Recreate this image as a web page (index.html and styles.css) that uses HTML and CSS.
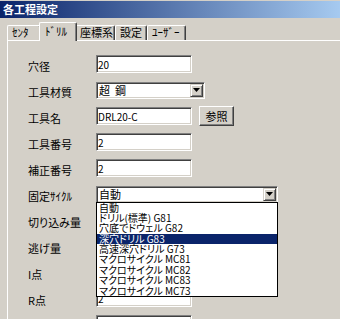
FILE: index.html
```html
<!DOCTYPE html>
<html lang="ja">
<head>
  <meta charset="UTF-8" />
  <title>各工程設定</title>
  <link rel="stylesheet" href="styles.css">
</head>
<body>

  <div class="titlebar">各工程設定</div>

  <div class="tabs">
    <div class="tab w1">ｾﾝﾀ</div>
    <div class="tab active">ﾄﾞﾘﾙ</div>
    <div class="tab w3">座標系</div>
    <div class="tab w4">設定</div>
    <div class="tab w5">ﾕｰｻﾞｰ</div>
  </div>

  <div class="panel">
    <div class="row">
      <label>穴径</label>
      <input class="field" type="text" value="20" />
    </div>
    <div class="row">
      <label>工具材質</label>
      <div class="combo short">
        <span class="value">超&nbsp;&nbsp;鋼</span>
        <span class="arrow"><svg width="7" height="4"><path d="M0 0h7L3.5 4z" /></svg></span>
      </div>
    </div>
    <div class="row">
      <label>工具名</label>
      <input class="field" type="text" value="DRL20-C" />
      <button class="btn">参照</button>
    </div>
    <div class="row">
      <label>工具番号</label>
      <input class="field" type="text" value="2" />
    </div>
    <div class="row">
      <label>補正番号</label>
      <input class="field" type="text" value="2" />
    </div>
    <div class="row">
      <label>固定ｻｲｸﾙ</label>
      <div class="combo long">
        <span class="value">自動</span>
        <span class="arrow"><svg width="7" height="4"><path d="M0 0h7L3.5 4z" /></svg></span>
        <div class="droplist">
          <div>自動</div>
          <div>ドリル(標準) G81</div>
          <div>穴底でドウェル G82</div>
          <div class="sel">深穴ドリル G83</div>
          <div>高速深穴ドリル G73</div>
          <div>マクロサイクル MC81</div>
          <div>マクロサイクル MC82</div>
          <div>マクロサイクル MC83</div>
          <div>マクロサイクル MC73</div>
        </div>
      </div>
    </div>
    <div class="row">
      <label>切り込み量</label>
      <input class="field" type="text" value="" />
    </div>
    <div class="row">
      <label>逃げ量</label>
      <input class="field" type="text" value="" />
    </div>
    <div class="row">
      <label>I点</label>
      <input class="field" type="text" value="" />
    </div>
    <div class="row">
      <label>R点</label>
      <input class="field" type="text" value="2" />
    </div>
    <div class="row">
      <label>Z点</label>
      <input class="field" type="text" value="0" />
    </div>
  </div>

</body>
</html>
```

FILE: styles.css
```css
html, body {
  height: 319px;
  overflow: hidden;
}

body {
  margin: 0;
  background: #d4d0c8;
  color: #000;
  font-family: "Noto Sans CJK JP", sans-serif;
  font-size: 11px;
}

.titlebar {
  height: 17px;
  margin-top: 1px;
  padding-left: 3px;
  background: linear-gradient(to right, #0a246a, #a6caf0);
  color: #fff;
  font-weight: bold;
  line-height: 17px;
}

.tabs {
  display: flex;
  align-items: flex-end;
  height: 18px;
  margin-top: 4px;
  padding-left: 7px;
}

.tab {
  box-sizing: border-box;
  height: 15px;
  padding-left: 4px;
  border: 1px solid #fff;
  border-right-color: #404040;
  border-bottom: none;
  border-radius: 2px 2px 0 0;
  box-shadow: inset -1px 0 #808080;
  line-height: 13px;
  white-space: nowrap;
}

.w1 { width: 34px; }
.w3 { width: 40px; }
.w4 { width: 32px; }
.w5 { width: 39px; }

.tab.active {
  position: relative;
  z-index: 1;
  width: 38px;
  height: 19px;
  margin: 0 -2px -1px;
  padding-left: 5px;
  background: #d4d0c8;
  line-height: 17px;
}

.panel {
  margin-left: 7px;
  padding: 10px 0 0 20px;
  border-top: 1px solid #fff;
  border-left: 1px solid #fff;
}

.row {
  display: flex;
  align-items: center;
  height: 26px;
}

.row label {
  width: 68px;
  padding-top: 3px;
  line-height: 14px;
  white-space: nowrap;
  font-feature-settings: "palt" 1;
}

.field {
  box-sizing: border-box;
  width: 96px;
  height: 18px;
  margin: 0;
  padding: 0 0 0 1px;
  border: 1px solid;
  border-color: #808080 #fff #fff #808080;
  box-shadow: inset 1px 1px #404040, inset -1px -1px #d4d0c8;
  background: #fff;
  font-family: "Noto Sans CJK JP", sans-serif;
  font-size: 10px;
  outline: none;
}

.btn {
  box-sizing: border-box;
  width: 35px;
  height: 20px;
  margin: 0 0 0 7px;
  padding: 0;
  border: 1px solid;
  border-color: #fff #404040 #404040 #fff;
  box-shadow: inset -1px -1px #808080;
  background: #d4d0c8;
  font-family: "Noto Sans CJK JP", sans-serif;
  font-size: 11px;
}

.combo {
  position: relative;
  box-sizing: border-box;
  display: flex;
  height: 17px;
  padding: 1px;
  border: 1px solid;
  border-color: #808080 #fff #fff #808080;
  box-shadow: inset 1px 1px #404040, inset -1px -1px #d4d0c8;
  background: #fff;
}

.combo.short { width: 109px; }
.combo.long { width: 182px; }

.combo .value {
  flex: 1;
  padding-left: 1px;
  line-height: 13px;
  white-space: nowrap;
}

.combo .arrow {
  box-sizing: border-box;
  display: flex;
  align-items: center;
  justify-content: center;
  width: 13px;
  border: 1px solid;
  border-color: #d4d0c8 #404040 #404040 #d4d0c8;
  box-shadow: inset 1px 1px #fff, inset -1px -1px #808080;
  background: #d4d0c8;
}

.droplist {
  position: absolute;
  z-index: 2;
  left: -1px;
  top: 100%;
  box-sizing: border-box;
  width: 182px;
  border: 1px solid #000;
  background: #fff;
  font-size: 10px;
  font-feature-settings: "palt" 1;
}

.droplist div {
  height: 10.4px;
  padding-left: 2px;
  line-height: 10.4px;
  white-space: nowrap;
}

.droplist .sel {
  background: #0a246a;
  color: #fff;
}
```
